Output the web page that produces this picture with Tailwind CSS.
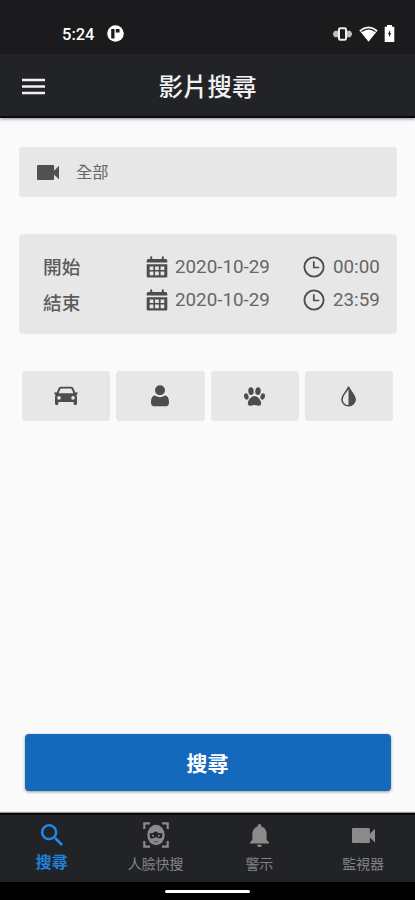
<!DOCTYPE html>
<html lang="zh-Hant">
<head>
<meta charset="utf-8">
<meta name="viewport" content="width=device-width, initial-scale=1">
<title>影片搜尋</title>
<script src="https://cdn.jsdelivr.net/npm/@tailwindcss/browser@4"></script>
</head>
<body class="bg-[#fafafa]">
<svg class="hidden">
  <symbol id="videocam" viewBox="3 6 18 12" preserveAspectRatio="none"><path d="M17 10.500V7c0-.55-.45-1-1-1H4c-.55 0-1 .45-1 1v10c0 .55.45 1 1 1h12c.55 0 1-.45 1-1v-3.500l4 4v-11l-4 4z"/></symbol>
  <symbol id="calendar" viewBox="0 0 22 22"><path fill-rule="evenodd" d="M4.200 1.300a1 1 0 0 1 2 0V3h9.600V1.300a1 1 0 0 1 2 0V3H19.800A1.500 1.500 0 0 1 21.300 4.500V6.600H.7V4.500A1.500 1.500 0 0 1 2.200 3H4.200ZM.7 8.200H21.300V20.200A1.300 1.300 0 0 1 20 21.500H2A1.300 1.300 0 0 1 .7 20.200ZM3.700 10.400v3.600H7.400v-3.600ZM9.100 10.400v3.600h3.700v-3.600ZM14.600 10.400v3.600h3.700v-3.600ZM3.700 15.600v3.600H7.400v-3.600ZM9.100 15.600v3.600h3.700v-3.600ZM14.600 15.600v3.600h3.700v-3.600Z"/></symbol>
  <symbol id="clock" viewBox="0 0 22 22"><circle cx="11" cy="11" r="9.600" fill="none" stroke="currentColor" stroke-width="1.900"/><path d="M10.800 5.200V11.500H16.200" fill="none" stroke="currentColor" stroke-width="1.700"/></symbol>
</svg>
<div class="flex h-[900px] w-[415px] flex-col overflow-hidden font-['Roboto','Noto_Sans_CJK_TC',sans-serif] text-[#595959]">
  <div class="flex h-[54px] shrink-0 items-center bg-[#1b1b1d] pr-5 pl-[62px] pt-[13px] text-white">
    <span class="w-[45px] pt-[2px] text-[16.500px] leading-5 font-medium">5:24</span>
    <svg class="size-[17px]" viewBox="0 0 17 17"><circle cx="8.500" cy="8.500" r="8.300" fill="#fff"/><path d="M4.200 4h3.300v9.500H4.200ZM8.800 4h3.700v3.600H8.800Z" fill="#1b1b1d"/></svg>
    <div class="ml-auto flex items-center">
      <svg class="mr-[7px] h-4 w-[19px]" viewBox="0 0 19 16"><path d="M0 7.200 1.700 4.800H5V11.200H1.700L0 8.800ZM19 7.200 17.300 4.800H14V11.200H17.300L19 8.800Z" fill="#bdbdbd"/><rect x="6" y="2.300" width="7" height="11.400" rx="1.200" fill="#1b1b1d" stroke="#eee" stroke-width="2"/></svg>
      <svg class="mr-[6px] h-4 w-[19px]" viewBox="0 0 19 16"><path d="M.3 4.200Q9.500-3 18.700 4.200L9.500 15.700Z" fill="#fff"/><path d="M2.500 5.600Q9.500.2 16.500 5.600" fill="none" stroke="#1b1b1d" stroke-width="1.300"/></svg>
      <svg class="h-[17px] w-[11px]" viewBox="0 0 11 17"><path d="M3 0h5v1.800h2.300V17H.7V1.800H3Z" fill="#fff"/><path d="M6.100 5 3.900 9.300H5v3L7.200 8.200H6.100Z" fill="#1b1b1d"/></svg>
    </div>
  </div>
  <header class="z-10 grid h-[64px] shrink-0 grid-cols-[1fr_auto_1fr] items-center border-b-2 border-[#0a0a12] bg-[#222326] pt-[3px] pr-[22px] pl-[22px] text-[#f1f1f1] shadow-[0_1px_3px_rgba(0,0,0,0.45)]">
    <svg class="h-[18px] w-[23px]" viewBox="0 0 23 18"><path d="M0 2H23M0 8.500H23M0 15H23" stroke="#f1f1f1" stroke-width="2.600"/></svg>
    <h1 class="pt-[2px] text-[24.500px] leading-[36px] font-medium">影片搜尋</h1>
  </header>
  <main class="flex grow flex-col px-[19px] pt-[29px]">
    <section class="flex h-[50px] w-[378px] items-center rounded-[4px] bg-[#e7e7e7] pl-[18px]">
      <svg class="h-[15px] w-[22px] fill-[#515151]"><use href="#videocam"/></svg>
      <span class="ml-[17px] pt-[2px] text-[16.300px] leading-6 text-[#666]">全部</span>
    </section>
    <section class="mt-[37px] flex h-[100px] w-[378px] rounded-[4px] bg-[#e7e7e7] pl-[24px]">
      <div class="w-[103px] pt-[16px] text-[18.700px] leading-[36px] font-medium text-[#5c5c5c]"><div>開始</div><div>結束</div></div>
      <div class="flex flex-col pt-[16px] text-[18.800px] leading-[33px] text-[#666]">
        <div class="flex h-[33px] items-center"><svg class="mr-[7px] size-[22px] fill-[#4d4d4d]"><use href="#calendar"/></svg><span class="w-[128px] pt-[2px]">2020-10-29</span><svg class="mr-[8px] size-[22px] text-[#4d4d4d]"><use href="#clock"/></svg><span class="pt-[2px]">00:00</span></div>
        <div class="flex h-[33px] items-center"><svg class="mr-[7px] size-[22px] fill-[#4d4d4d]"><use href="#calendar"/></svg><span class="w-[128px] pt-[2px]">2020-10-29</span><svg class="mr-[8px] size-[22px] text-[#4d4d4d]"><use href="#clock"/></svg><span class="pt-[2px]">23:59</span></div>
      </div>
    </section>
    <section class="mx-[3px] mt-[37px] grid h-[50px] w-[371px] grid-cols-4 gap-[6px]">
      <div class="flex items-center justify-center rounded-[4px] bg-[#e7e7e7]">
        <svg class="h-[20px] w-[24px]" viewBox="0 0 24 20"><path fill="#4d4d4d" fill-rule="evenodd" d="M7 .8H17C18.500.8 19.300 1.700 19.800 3L21.300 6.600 23.500 6.200V8.300L22.400 8.800 23 11V17.200Q23 19.200 21.300 19.200T19.600 17.200V16H4.400V17.200Q4.400 19.200 2.700 19.200T1 17.200V11L1.600 8.800 .5 8.300V6.200L2.700 6.600 4.200 3C4.700 1.700 5.500.8 7 .8ZM7.500 2.600Q6.500 2.600 6 3.700L4.600 7.200H19.400L18 3.700Q17.500 2.600 16.500 2.600ZM5 10.100A1.800 1.800 0 1 0 5 13.700 1.800 1.800 0 0 0 5 10.100ZM19 10.100A1.800 1.800 0 1 0 19 13.700 1.800 1.800 0 0 0 19 10.100Z"/></svg>
      </div>
      <div class="flex items-center justify-center rounded-[4px] bg-[#e7e7e7]">
        <svg class="h-[22px] w-[18px] fill-[#4d4d4d]" viewBox="0 0 18 22"><circle cx="9" cy="5.300" r="5"/><path d="M4 10.400Q9 14 14 10.400C17 10.800 18 13.500 18 17.500Q18 21.200 15 21.200H3Q0 21.200 0 17.500C0 13.500 1 10.800 4 10.400Z"/></svg>
      </div>
      <div class="flex items-center justify-center rounded-[4px] bg-[#e7e7e7]">
        <svg class="h-[19px] w-[21px] fill-[#4d4d4d]" viewBox="0 0 21 18" preserveAspectRatio="none"><ellipse cx="7" cy="3.900" rx="2.700" ry="3.700" transform="rotate(-8 7 3.900)"/><ellipse cx="14" cy="3.900" rx="2.700" ry="3.700" transform="rotate(8 14 3.900)"/><ellipse cx="2.300" cy="9" rx="2.200" ry="3" transform="rotate(-20 2.300 9)"/><ellipse cx="18.700" cy="9" rx="2.200" ry="3" transform="rotate(20 18.700 9)"/><path d="M10.500 8.500C13.500 8.500 17 12.300 17.200 15.300 17.300 17.700 15 18.200 13.500 17.500 11.500 16.800 9.500 16.800 7.500 17.500 6 18.200 3.700 17.700 3.800 15.300 4 12.300 7.500 8.500 10.500 8.500Z"/></svg>
      </div>
      <div class="flex items-center justify-center rounded-[4px] bg-[#e7e7e7]">
        <svg class="h-[22px] w-[15px]" viewBox="0 0 15 22"><path d="M7.500 2C6.500 6 1 9.800 1 14.500A6.500 6.300 0 0 0 14 14.500C14 9.800 8.500 6 7.500 2Z" fill="none" stroke="#4d4d4d" stroke-width="1.600"/><path d="M7.500.5C8.500 5 14.500 9.500 14.500 14.500A7 6.800 0 0 1 7.500 21.300Z" fill="#4d4d4d"/></svg>
      </div>
    </section>
    <button class="mx-auto mt-auto mb-[22px] flex h-[57px] w-[366px] items-center justify-center rounded-[4px] bg-[#1469bc] pt-[2px] text-[21px] leading-8 font-bold text-white shadow-[0_1px_3px_rgba(0,0,0,0.4)]">搜尋</button>
  </main>
  <nav class="grid h-[69px] shrink-0 grid-cols-4 border-t-2 border-[#08080c] bg-[#222326] text-[14px] text-[#848484] shadow-[0_-1px_1px_rgba(0,0,0,0.4)]">
    <a class="flex flex-col items-center pt-[9px] text-[#1e82dc]">
      <svg class="size-[22px] fill-[#1e88e5]" viewBox="3 3 17.500 17.500"><path d="M15.500 14h-.79l-.28-.27C15.410 12.590 16 11.110 16 9.500 16 5.910 13.090 3 9.500 3S3 5.910 3 9.500 5.910 16 9.500 16c1.610 0 3.090-.59 4.230-1.570l.27.28v.79l5 4.990L20.490 19l-4.990-5zm-6 0C7.010 14 5 11.990 5 9.500S7.010 5 9.500 5 14 7.010 14 9.500 11.990 14 9.500 14z"/></svg>
      <span class="mt-[7px] text-[16px] leading-5 font-bold">搜尋</span>
    </a>
    <a class="flex flex-col items-center pt-[7px]">
      <svg class="size-[26px]" viewBox="0 0 26 26"><path d="M1.300 7V1.300H7M19 1.300H24.700V7M24.700 19V24.700H19M7 24.700H1.300V19" fill="none" stroke="#8b8b8b" stroke-width="2.200"/><ellipse cx="13" cy="13" rx="8.700" ry="10.200" fill="#8b8b8b"/><path d="M6.500 11.500Q10.500 11.500 12.500 9.200 15 11.500 19.500 11.500L19 15.500Q17.500 17 15 16L13 15 11 16Q8 17 7 15.500Z" fill="#222326"/><circle cx="10" cy="13.700" r="1" fill="#8b8b8b"/><circle cx="15.800" cy="13.700" r="1" fill="#8b8b8b"/><path d="M10.500 19.300Q13 20.500 15.500 19.300" fill="none" stroke="#505153" stroke-width="1"/></svg>
      <span class="mt-[6px] leading-5">人臉快搜</span>
    </a>
    <a class="flex flex-col items-center pt-[9px]">
      <svg class="h-[23px] w-[19px] fill-[#8b8b8b]" viewBox="4 2.500 16 19.500" preserveAspectRatio="none"><path d="M12 22c1.100 0 2-.9 2-2h-4c0 1.100.89 2 2 2zm6-6v-5c0-3.070-1.640-5.640-4.500-6.320V4c0-.83-.67-1.500-1.500-1.500s-1.500.67-1.500 1.500v.68C7.630 5.360 6 7.920 6 11v5l-2 2v1h16v-1l-2-2z"/></svg>
      <span class="mt-[7px] leading-5">警示</span>
    </a>
    <a class="flex flex-col items-center pt-[13px]">
      <svg class="h-[15px] w-[23px] fill-[#8b8b8b]"><use href="#videocam"/></svg>
      <span class="mt-[11px] leading-5">監視器</span>
    </a>
  </nav>
  <div class="flex h-[18px] shrink-0 justify-center bg-black pt-[8px]"><div class="h-[3px] w-[85px] rounded-full bg-white"></div></div>
</div>
</body>
</html>
